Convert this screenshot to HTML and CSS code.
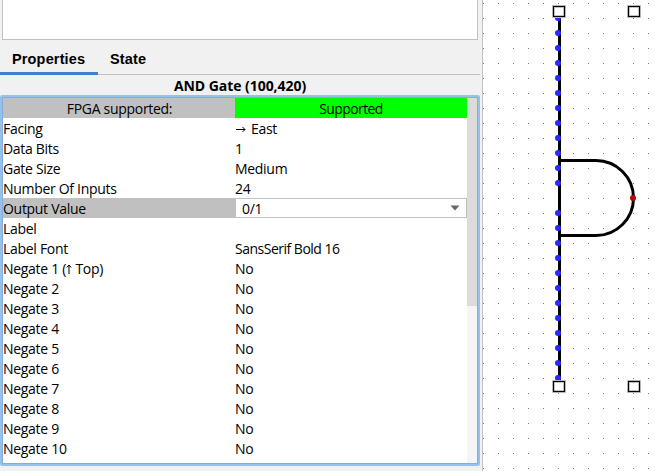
FILE: index.html
```html
<!DOCTYPE html>
<html lang="en">
<head>
<meta charset="utf-8">
<title>Circuit editor</title>
<link rel="stylesheet" href="styles.css">
</head>
<body>
<main class="app">
  <section class="sidebar">
    <div class="explorer"></div>
    <nav class="tabs">
      <div class="tab active">Properties</div>
      <div class="tab state">State</div>
    </nav>
    <h1 class="title"><span>AND Gate (100,420)</span></h1>
    <div class="panel">
      <div class="table">
        <div class="row head"><div class="key"><span>FPGA supported:</span></div><div class="value">Supported</div></div>
        <div class="row"><div class="key">Facing</div><div class="value"><svg class="arrow" width="11" height="8" viewBox="0 0 11 8"><path d="M1 4.500H10M7.500 2L10 4.500L7.500 7"/></svg><span>East</span></div></div>
        <div class="row"><div class="key">Data Bits</div><div class="value">1</div></div>
        <div class="row"><div class="key">Gate Size</div><div class="value">Medium</div></div>
        <div class="row"><div class="key">Number Of Inputs</div><div class="value">24</div></div>
        <div class="row selected"><div class="key">Output Value</div><div class="value combo"><span>0/1</span><svg width="10" height="6" viewBox="0 0 10 6"><path d="M.5 .5H9.500L5 5.500Z"/></svg></div></div>
        <div class="row"><div class="key">Label</div><div class="value"></div></div>
        <div class="row"><div class="key">Label Font</div><div class="value font-name">SansSerif Bold 16</div></div>
        <div class="row"><div class="key">Negate 1 (<svg class="up" width="6" height="10" viewBox="0 0 6 10"><path d="M3 10V1M.8 3.500L3 1L5.200 3.500"/></svg> Top)</div><div class="value">No</div></div>
        <div class="row"><div class="key">Negate 2</div><div class="value">No</div></div>
        <div class="row"><div class="key">Negate 3</div><div class="value">No</div></div>
        <div class="row"><div class="key">Negate 4</div><div class="value">No</div></div>
        <div class="row"><div class="key">Negate 5</div><div class="value">No</div></div>
        <div class="row"><div class="key">Negate 6</div><div class="value">No</div></div>
        <div class="row"><div class="key">Negate 7</div><div class="value">No</div></div>
        <div class="row"><div class="key">Negate 8</div><div class="value">No</div></div>
        <div class="row"><div class="key">Negate 9</div><div class="value">No</div></div>
        <div class="row"><div class="key">Negate 10</div><div class="value">No</div></div>
      </div>
      <div class="scrollbar"><div class="thumb"></div></div>
    </div>
  </section>
  <svg class="canvas" width="173" height="471" viewBox="483 0 173 471">
    <defs>
      <pattern id="grid" x="483" y="3" width="15" height="15" patternUnits="userSpaceOnUse"><rect width="1" height="1" fill="#777"/></pattern>
      <g id="handle"><rect x="-.5" y="-.5" width="13" height="12" fill="#fff" stroke="#c8cac4"/><rect x="1" y="1" width="10" height="9" fill="#fff" stroke="#d8d8d8" stroke-width="2"/><rect x=".5" y=".5" width="11" height="10" fill="none" stroke="#000" stroke-width="1.200"/></g>
    </defs>
    <rect x="483" width="173" height="471" fill="url(#grid)"/>
    <g fill="none" stroke="#000" stroke-width="3"><path d="M559.500 12V386"/><path d="M560 160.500H596A37.500 37.500 0 0 1 596 235.500H560"/></g>
    <path d="M558 18V184M558 213V379" stroke="#2828ff" stroke-width="6" stroke-linecap="round" stroke-dasharray="0 15"/>
    <circle cx="633" cy="198" r="3" fill="#c00000"/>
    <use href="#handle" x="553" y="6"/><use href="#handle" x="628" y="6"/>
    <use href="#handle" x="553" y="381"/><use href="#handle" x="628" y="381"/>
  </svg>
</main>
</body>
</html>
```
FILE: styles.css
```css
* { box-sizing: border-box; }
body { margin: 0; background: #fff; color: #000; font: 14px/22px "Open Sans", sans-serif; }
.app { display: flex; width: 656px; height: 471px; overflow: hidden; }
.sidebar { width: 483px; height: 471px; background: #f1f1f1; border-right: 1px solid #c0c0c0; }
.explorer { height: 40px; width: 476px; margin-left: 2px; background: #fff; border: 1px solid #c0c0c0; border-top: 0; }
.tabs { display: flex; width: 480px; height: 35px; border-bottom: 1px solid #c0c0c0; font: bold 14.500px/20px "Liberation Sans", sans-serif; letter-spacing: .15px; }
.tab { width: 98px; height: 35px; padding: 9px 0 0 12px; white-space: nowrap; }
.active { border-bottom: 3px solid #3c83c5; }
.state { padding-left: 12px; }
.title { height: 20px; width: 480px; margin: 0; padding-top: 1px; text-align: center; font: bold 14px/20px "Open Sans", sans-serif; letter-spacing: -.05px; }
.panel { display: flex; width: 480px; height: 371px; padding: 1px; background: #fff; border: 2px solid #97c1e9; border-radius: 2px; box-shadow: inset 0 0 0 1px #84addb; }
.table { width: 464px; letter-spacing: -.3px; }
.row { display: flex; height: 20px; white-space: nowrap; }
.key { width: 232px; }
.value { width: 232px; display: flex; }
.font-name { letter-spacing: -.5px; }
.head { text-align: center; }
.head .key { background: #c0c0c0; padding-left: 1px; }
.head .value { background: #0f0; justify-content: center; letter-spacing: -.6px; }
.selected .key { background: #c0c0c0; }
.combo { background: #fff; border: 1px solid #c0c0c0; justify-content: space-between; align-items: center; padding: 1px 6px 0; }
.combo svg { margin-bottom: 1px; }
.combo path { fill: #666; }
.arrow { margin: 7px 5px 0 0; }
.arrow path, .up path { fill: none; stroke: #000; stroke-width: 1; }
.scrollbar { width: 10px; background: #f5f5f5; }
.thumb { height: 208px; background: #dbdbdb; }
.canvas { display: block; flex: none; }
```
